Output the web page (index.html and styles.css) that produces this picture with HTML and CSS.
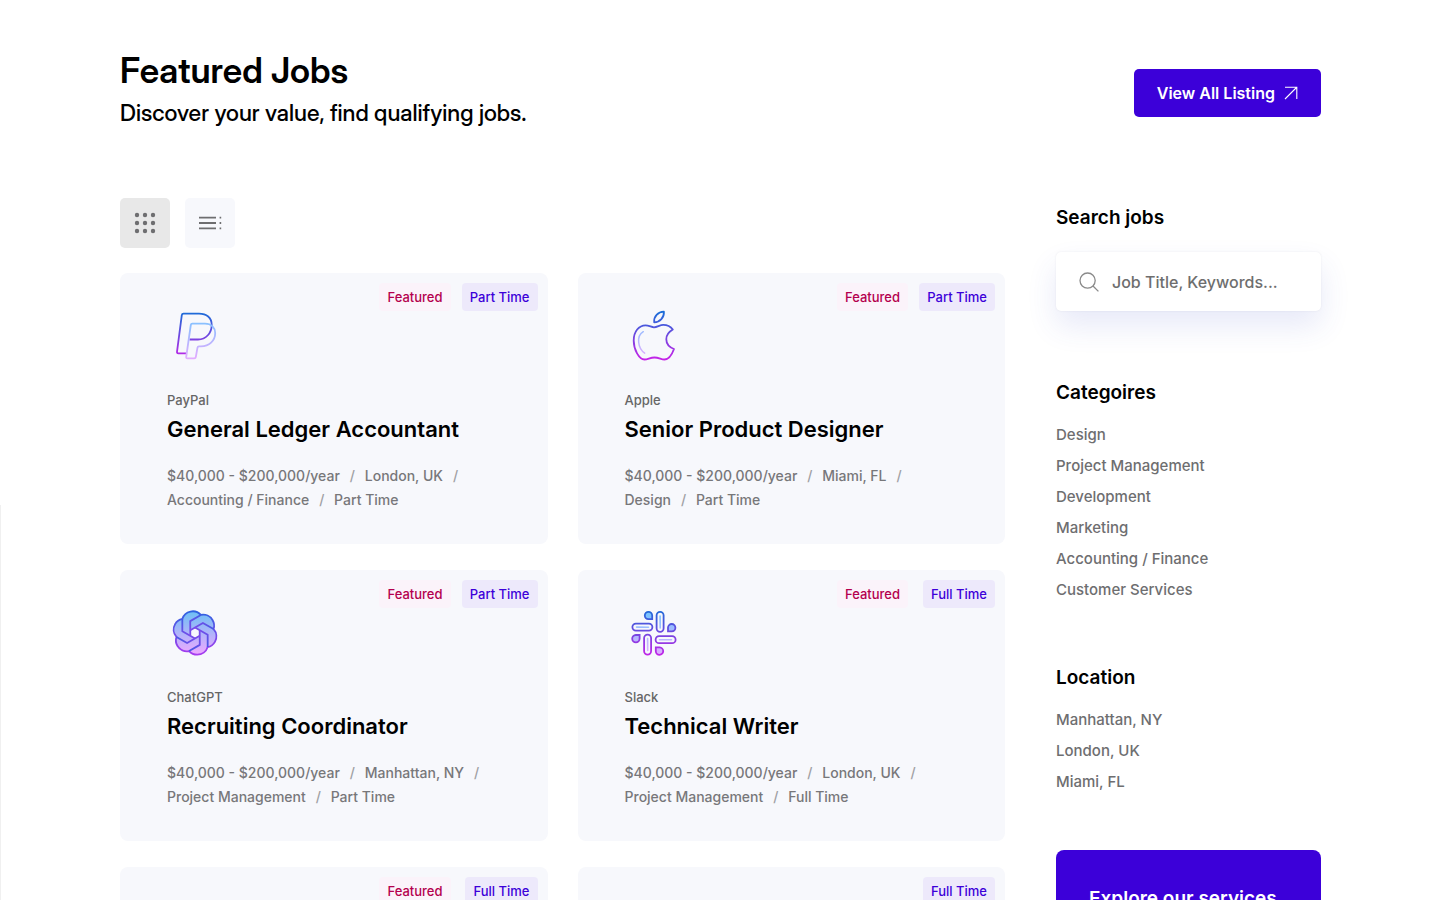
FILE: index.html
```
<!DOCTYPE html>
<html lang="en">
<head>
  <meta charset="UTF-8" />
  <meta name="viewport" content="width=device-width, initial-scale=1.0" />
  <title>Featured Jobs</title>
  <link rel="stylesheet" href="styles.css">
</head>
<body>
  <!-- Shared gradients -->
  <svg class="defs" width="0" height="0" aria-hidden="true">
    <defs>
      <linearGradient id="line" gradientUnits="userSpaceOnUse" x1="0" y1="4" x2="0" y2="52">
        <stop offset="0" stop-color="#1a6dd8" />
        <stop offset="1" stop-color="#c822e8" />
      </linearGradient>
      <linearGradient id="soft" gradientUnits="userSpaceOnUse" x1="0" y1="4" x2="0" y2="52">
        <stop offset="0" stop-color="#6dc7ff" />
        <stop offset="1" stop-color="#e6abff" />
      </linearGradient>
      <linearGradient id="ai-line" gradientUnits="userSpaceOnUse" x1="0" y1="0" x2="0" y2="24">
        <stop offset="0" stop-color="#2f62e0" />
        <stop offset="1" stop-color="#a83cf0" />
      </linearGradient>
      <linearGradient id="ai-fill" gradientUnits="userSpaceOnUse" x1="0" y1="0" x2="0" y2="24">
        <stop offset="0" stop-color="#6dc0f5" />
        <stop offset="1" stop-color="#f0a8ff" />
      </linearGradient>
    </defs>
  </svg>

  <div class="edge-panel"></div>

  <div class="container">
    <header class="section-header">
      <div class="section-heading">
        <h2 class="section-title">Featured Jobs</h2>
        <p class="section-subtitle">Discover your value, find qualifying jobs.</p>
      </div>
      <a href="#" class="btn">View All Listing
        <svg width="14" height="14" viewBox="0 0 14 14" fill="none" stroke="currentColor" stroke-width="1.1"><path d="M1 13L12.5 1.5M1 1.2h11.8V13" /></svg>
      </a>
    </header>

    <div class="layout">
      <main class="jobs">
        <div class="view-toggle">
          <button type="button" class="view-btn active" aria-label="Grid view">
            <svg width="22" height="22" viewBox="0 0 22 22" fill="currentColor">
              <circle cx="3" cy="3" r="2.2" /><circle cx="11" cy="3" r="2.2" /><circle cx="19" cy="3" r="2.2" />
              <circle cx="3" cy="11" r="2.2" /><circle cx="11" cy="11" r="2.2" /><circle cx="19" cy="11" r="2.2" />
              <circle cx="3" cy="19" r="2.2" /><circle cx="11" cy="19" r="2.2" /><circle cx="19" cy="19" r="2.2" />
            </svg>
          </button>
          <button type="button" class="view-btn" aria-label="List view">
            <svg width="24" height="16" viewBox="0 0 24 16" stroke="currentColor" stroke-width="1.8"><path d="M1 2.7h17M1 8h17M1 13.3h17M21.6 2.7h1.6M21.6 8h1.6M21.6 13.3h1.6" /></svg>
          </button>
        </div>

        <div class="job-grid">
          <article class="job-card">
            <div class="tags"><span class="tag tag-featured">Featured</span><span class="tag tag-type">Part Time</span></div>
            <svg class="logo" viewBox="0 0 56 56" fill="none" stroke-width="1.8" stroke-linejoin="round">
              <path stroke="url(#line)" d="M22.5 31.5H31C39 31.5 44.7 25 44.7 17C44.7 9.5 39.5 5.7 32 5.7H16.5Q15 5.7 14.8 7.2L10 43.8Q9.8 45.3 11.3 45.3H19" />
              <path stroke="url(#soft)" d="M25.3 15.7H38C44.5 15.7 48.2 19.8 48.2 25C48.2 33 42 38.3 34 38.3H32Q30.7 38.3 30.5 39.6L28.8 49Q28.6 50.3 27.3 50.3H20.3Q19 50.3 19.2 49L23.8 17Q24 15.7 25.3 15.7Z" />
            </svg>
            <p class="company">PayPal</p>
            <h3 class="job-title">General Ledger Accountant</h3>
            <p class="meta"><span>$40,000 - $200,000/year</span> <span>London, UK</span> <span>Accounting / Finance</span> <span>Part Time</span></p>
          </article>

          <article class="job-card">
            <div class="tags"><span class="tag tag-featured">Featured</span><span class="tag tag-type">Part Time</span></div>
            <svg class="logo" viewBox="0 0 56 56" fill="none" stroke-width="1.8" stroke-linejoin="round" stroke-linecap="round">
              <path stroke="url(#line)" d="M29 19.3C32 19.3 35 16.9 38.2 16.9C42 16.9 45.5 18.4 47.8 21.5C43.5 24 41.3 27 41.3 31.2C41.3 35.6 44.5 39.2 49 41C47 46.5 43.5 51.5 39.5 51.5C36 51.5 34 49.5 29.5 49.5C25 49.5 23 51.5 19.5 51.5C14 51.5 8.7 41.5 8.7 32.5C8.7 23.5 14 17.3 20.5 17.3C24 17.3 26.5 19.3 29 19.3Z" />
              <path stroke="url(#line)" d="M29.2 14.3C28.6 8.6 33 4 38.9 3.7C39.3 9.5 35 14 29.2 14.3Z" />
              <path stroke="url(#soft)" stroke-width="1.5" d="M18.3 23.7C11 28 12.8 40.5 19.7 45.2" />
            </svg>
            <p class="company">Apple</p>
            <h3 class="job-title">Senior Product Designer</h3>
            <p class="meta"><span>$40,000 - $200,000/year</span> <span>Miami, FL</span> <span>Design</span> <span>Part Time</span></p>
          </article>

          <article class="job-card">
            <div class="tags"><span class="tag tag-featured">Featured</span><span class="tag tag-type">Part Time</span></div>
            <svg class="logo" viewBox="-3.5 -3.5 31 31" fill="none" stroke="url(#ai-line)" stroke-linejoin="round">
              <path fill="url(#ai-fill)" d="M22.2819 9.8211a5.9847 5.9847 0 0 0-.5157-4.9108 6.0462 6.0462 0 0 0-6.5098-2.9A6.0651 6.0651 0 0 0 4.9807 4.1818a5.9847 5.9847 0 0 0-3.9977 2.9 6.0462 6.0462 0 0 0 .7427 7.0966 5.98 5.98 0 0 0 .511 4.9107 6.051 6.051 0 0 0 6.5146 2.9001A5.9847 5.9847 0 0 0 13.2599 24a6.0557 6.0557 0 0 0 5.7718-4.2058 5.9894 5.9894 0 0 0 3.9977-2.9001 6.0557 6.0557 0 0 0-.7475-7.073z" />
              <path fill="#f7f8fc" stroke="none" d="M12 9.2l2.5 1.4v2.8L12 14.8l-2.5 -1.4v-2.8z" />
              <path d="M4.98 4.2V11L12 15" />
              <path d="M4.98 4.2V11L12 15" transform="rotate(60 12 12)" />
              <path d="M4.98 4.2V11L12 15" transform="rotate(120 12 12)" />
              <path d="M4.98 4.2V11L12 15" transform="rotate(180 12 12)" />
              <path d="M4.98 4.2V11L12 15" transform="rotate(240 12 12)" />
              <path d="M4.98 4.2V11L12 15" transform="rotate(300 12 12)" />
            </svg>
            <p class="company">ChatGPT</p>
            <h3 class="job-title">Recruiting Coordinator</h3>
            <p class="meta"><span>$40,000 - $200,000/year</span> <span>Manhattan, NY</span> <span>Project Management</span> <span>Part Time</span></p>
          </article>

          <article class="job-card">
            <div class="tags"><span class="tag tag-featured">Featured</span><span class="tag tag-type">Full Time</span></div>
            <svg class="logo" viewBox="0 0 56 56" fill="none" stroke-width="1.8" stroke-linecap="round">
              <g stroke="url(#line)">
                <rect x="7.4" y="18.6" width="20" height="7" rx="3.5" />
                <rect x="31.6" y="6.8" width="7" height="20" rx="3.5" />
                <rect x="30.6" y="31.2" width="20" height="7" rx="3.5" />
                <rect x="19.1" y="29.6" width="7" height="20" rx="3.5" />
              </g>
              <g stroke="url(#line)" fill="url(#soft)">
                <path d="M27.2 14.2H23.4A3.7 3.7 0 1 1 27.2 10.4Z" />
                <path d="M43 26.4V22.6A3.7 3.7 0 1 1 46.8 26.4Z" />
                <path d="M14.6 30V33.8A3.7 3.7 0 1 1 10.8 30Z" />
                <path d="M30.8 42.4H34.6A3.7 3.7 0 1 1 30.8 46.2Z" />
              </g>
              <path stroke="url(#soft)" stroke-width="1.6" d="M11.5 22.1L23.5 22.2M35.1 11L35.2 23M34.5 34.7L46.5 34.8M22.6 33.5L22.7 45.5" />
            </svg>
            <p class="company">Slack</p>
            <h3 class="job-title">Technical Writer</h3>
            <p class="meta"><span>$40,000 - $200,000/year</span> <span>London, UK</span> <span>Project Management</span> <span>Full Time</span></p>
          </article>

          <article class="job-card">
            <div class="tags"><span class="tag tag-featured">Featured</span><span class="tag tag-type">Full Time</span></div>
          </article>

          <article class="job-card">
            <div class="tags"><span class="tag tag-type">Full Time</span></div>
          </article>
        </div>
      </main>

      <aside class="sidebar">
        <form class="widget widget-search">
          <label class="widget-title" for="search">Search jobs</label>
          <div class="search-box">
            <svg width="20" height="20" viewBox="0 0 20 20" fill="none" stroke="currentColor" stroke-width="1.3"><circle cx="8.6" cy="8.6" r="7.6" /><path d="M14 14l5.4 5.4" /></svg>
            <input type="text" id="search" placeholder="Job Title, Keywords...">
          </div>
        </form>

        <section class="widget">
          <h4 class="widget-title">Categoires</h4>
          <ul class="widget-list">
            <li><a href="#">Design</a></li>
            <li><a href="#">Project Management</a></li>
            <li><a href="#">Development</a></li>
            <li><a href="#">Marketing</a></li>
            <li><a href="#">Accounting / Finance</a></li>
            <li><a href="#">Customer Services</a></li>
          </ul>
        </section>

        <section class="widget widget-location">
          <h4 class="widget-title">Location</h4>
          <ul class="widget-list">
            <li><a href="#">Manhattan, NY</a></li>
            <li><a href="#">London, UK</a></li>
            <li><a href="#">Miami, FL</a></li>
          </ul>
        </section>

        <section class="promo">
          <h4 class="promo-title">Explore our services</h4>
        </section>
      </aside>
    </div>
  </div>
</body>
</html>
```
FILE: styles.css
```
* {
  margin: 0;
  padding: 0;
  box-sizing: border-box;
}

body {
  font-family: Inter, "Liberation Sans", sans-serif;
  font-weight: 500;
  color: #000;
  background: #fff;
}

a {
  color: inherit;
  text-decoration: none;
}

.defs {
  position: absolute;
}

.edge-panel {
  position: fixed;
  top: 505px;
  bottom: 0;
  left: 0;
  width: 1px;
  background: #f0f0f0;
}

.container {
  max-width: 1440px;
  height: 100vh;
  margin: 0 auto;
  padding: 48px 119px 0 120px;
  overflow: hidden;
}

/* Header */
.section-header {
  display: flex;
  align-items: center;
  justify-content: space-between;
  margin-bottom: 61px;
}

.section-heading {
  padding-bottom: 8px;
}

.section-title {
  font-family: "Inter Display", Inter, "Liberation Sans", sans-serif;
  font-size: 35px;
  line-height: 44px;
  font-weight: 600;
  margin-bottom: 5px;
}

.section-subtitle {
  font-family: "Inter Display", Inter, "Liberation Sans", sans-serif;
  font-size: 23px;
  line-height: 32px;
}

.btn {
  display: flex;
  align-items: center;
  gap: 9px;
  height: 48px;
  padding: 0 23px;
  border-radius: 5px;
  background: #3c00d9;
  color: #fff;
  font-size: 16px;
  font-weight: 600;
}

/* Two columns */
.layout {
  display: grid;
  grid-template-columns: 1fr 265px;
  gap: 51px;
}

.view-toggle {
  display: flex;
  gap: 15px;
  margin-bottom: 25px;
}

.view-btn {
  display: flex;
  align-items: center;
  justify-content: center;
  width: 50px;
  height: 50px;
  border: 0;
  border-radius: 5px;
  background: #f7f8fc;
  color: #6e6e70;
  cursor: pointer;
}

.view-btn.active {
  background: #e8e8e8;
}

/* Job cards */
.job-grid {
  display: grid;
  grid-template-columns: 1fr 1fr;
  gap: 26px 30px;
}

.job-card {
  position: relative;
  min-height: 271px;
  padding: 35px 47px 32px;
  border-radius: 8px;
  background: #f7f8fc;
}

.tags {
  position: absolute;
  top: 10px;
  right: 10px;
  display: flex;
}

.tag {
  padding: 0 8px;
  border-radius: 4px;
  font-size: 13px;
  line-height: 28px;
}

.tag-featured {
  position: absolute;
  right: 87px;
  background: #fbf3fa;
  color: #b4004e;
}

.tag-type {
  background: #ede9fb;
  color: #3c00d9;
}

.logo {
  display: block;
  width: 56px;
  height: 56px;
  margin-bottom: 26px;
}

.company {
  font-size: 13px;
  line-height: 20px;
  color: #666;
  margin-bottom: 4px;
}

.job-title {
  font-size: 22px;
  line-height: 30px;
  font-weight: 600;
  margin-bottom: 20px;
}

.meta {
  font-size: 14px;
  line-height: 24px;
  color: #77777a;
}

.meta span {
  display: inline-block;
  white-space: nowrap;
}

.meta span:not(:last-child)::after {
  content: "/";
  margin: 0 6px 0 10px;
  color: #a0a0a4;
}

/* Sidebar */
.sidebar {
  padding-top: 6px;
}

.widget {
  margin-bottom: 59px;
}

.widget-title {
  display: block;
  font-size: 19px;
  line-height: 28px;
  font-weight: 600;
  margin-bottom: 12px;
}

.widget-search {
  margin-bottom: 68px;
}

.widget-search .widget-title {
  margin-bottom: 20px;
}

.widget-location {
  margin-bottom: 53px;
}

.search-box {
  display: flex;
  align-items: center;
  gap: 13px;
  height: 59px;
  padding: 0 23px;
  border-radius: 5px;
  background: #fff;
  color: #8a8a8a;
  box-shadow: 0 0 2px rgba(60, 60, 100, 0.1), 0 15px 30px rgba(60, 70, 200, 0.12);
}

.search-box svg {
  flex: none;
}

.search-box input {
  width: 100%;
  min-width: 0;
  border: 0;
  outline: 0;
  background: none;
  font: inherit;
  font-size: 16px;
}

.search-box input::placeholder {
  color: #6e6e6e;
}

.widget-list {
  list-style: none;
  font-size: 15px;
  line-height: 31px;
  color: #6e6e70;
}

.promo {
  min-height: 300px;
  padding: 34px 33px;
  border-radius: 8px;
  background: #3c00d9;
  color: #fff;
}

.promo-title {
  font-size: 19px;
  line-height: 30px;
  font-weight: 600;
}
```
